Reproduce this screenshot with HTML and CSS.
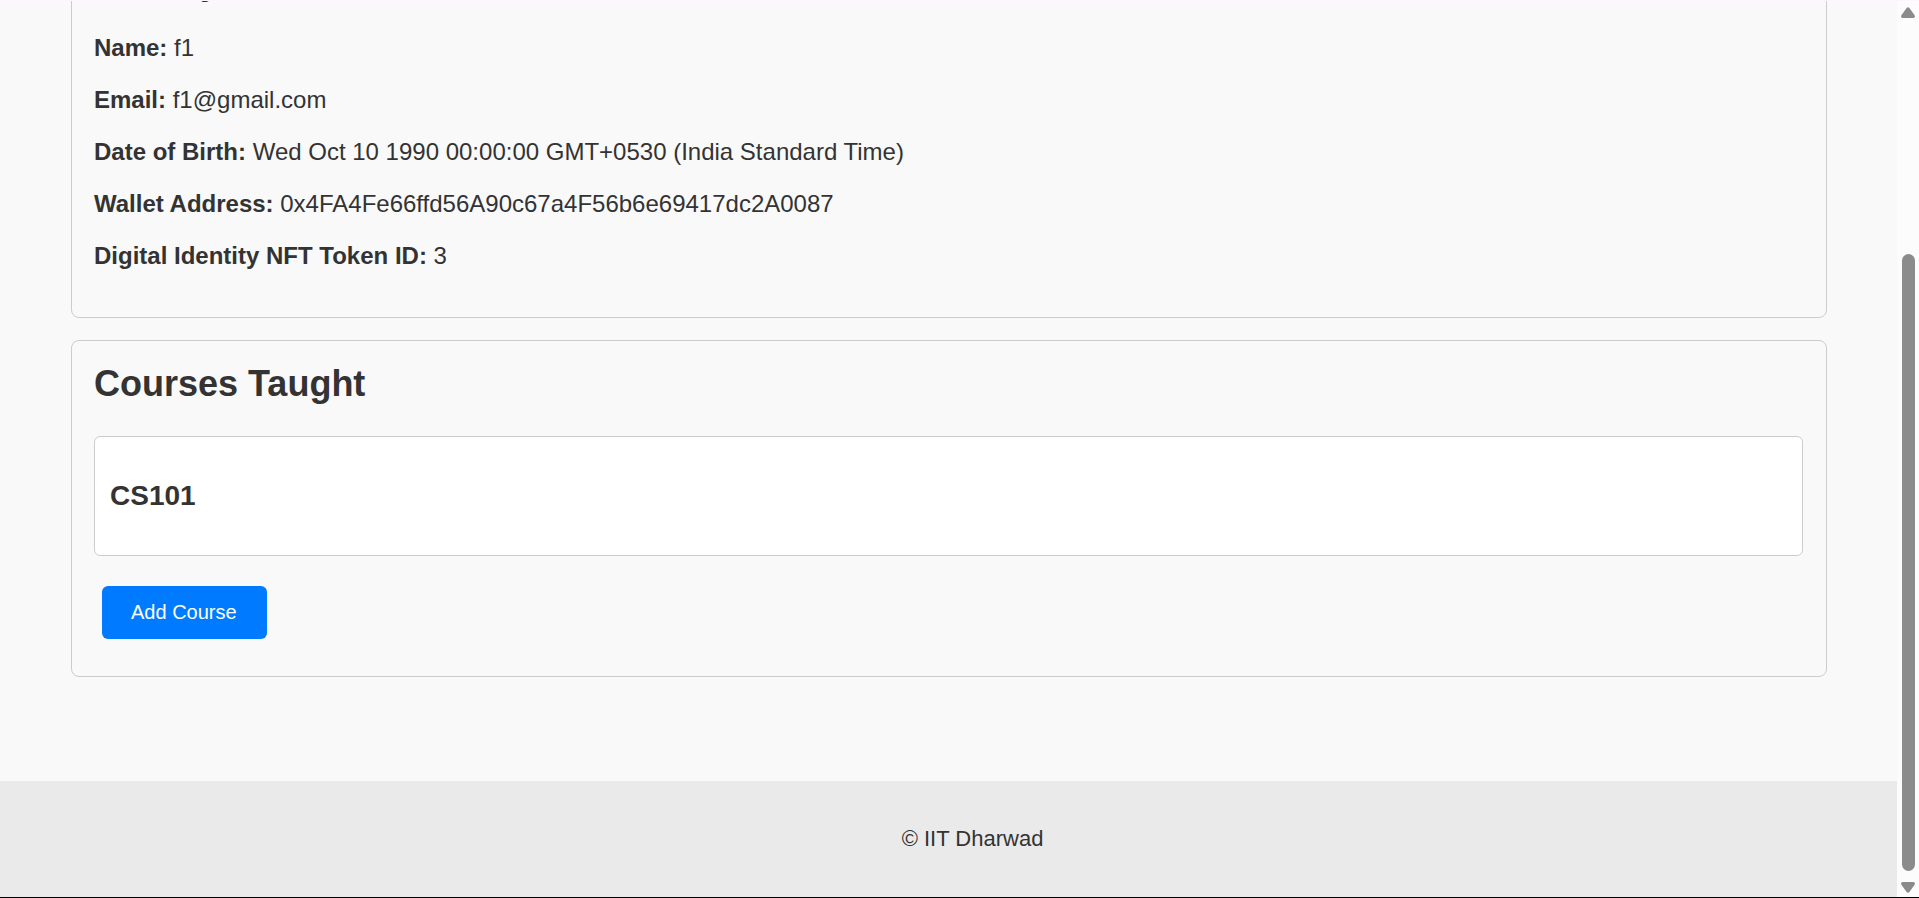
FILE: index.html
```html
<!DOCTYPE html>
<html lang="en">
<head>
<meta charset="utf-8">
<title>Faculty Profile</title>
<link rel="stylesheet" href="styles.css">
</head>
<body>
<div class="viewport">
  <div class="page">
    <main class="content">
      <section class="card card-identity">
        <h2 class="card-title">Faculty Details</h2>
        <p class="field"><strong>Name:</strong> f1</p>
        <p class="field"><strong>Email:</strong> f1@gmail.com</p>
        <p class="field"><strong>Date of Birth:</strong> Wed Oct 10 1990 00:00:00 GMT+0530 (India Standard Time)</p>
        <p class="field"><strong>Wallet Address:</strong> 0x4FA4Fe66ffd56A90c67a4F56b6e69417dc2A0087</p>
        <p class="field"><strong>Digital Identity NFT Token ID:</strong> 3</p>
      </section>
      <section class="card card-courses">
        <h2 class="card-title">Courses Taught</h2>
        <article class="course"><h3 class="course-name">CS101</h3></article>
        <button class="add-course" type="button">Add Course</button>
      </section>
    </main>
    <footer class="footer"><p class="footer-text">© IIT Dharwad</p></footer>
  </div>
  <div class="scrollbar" aria-hidden="true">
    <svg class="arrow" viewBox="0 0 14 11"><path d="M5.6 1Q7-.6 8.4 1L13.6 8.2Q14.6 10.6 12.4 11H1.6Q-.6 10.6.4 8.2Z"/></svg>
    <div class="thumb"></div>
    <svg class="arrow" viewBox="0 0 14 11"><path d="M5.6 10Q7 11.6 8.4 10L13.6 2.8Q14.6.4 12.4 0H1.6Q-.6.4.4 2.8Z"/></svg>
  </div>
</div>
</body>
</html>
```
FILE: styles.css
```css
* { box-sizing: border-box; }
body {
  margin: 0;
  background: #f9f9f9;
  color: #333;
  font: 24px/28px "Liberation Sans", Arial, sans-serif;
}
.viewport {
  display: flex;
  height: 100vh;
  overflow: hidden;
  border-top: 1px solid #fdf5fd;
  border-bottom: 1px solid #000;
}
.page {
  flex: 1;
  min-width: 0;
  display: flex;
  flex-direction: column;
  justify-content: flex-end;
}
.content {
  display: flex;
  flex-direction: column;
  gap: 22px;
  padding: 0 70px 104px 71px;
}
.card {
  border: 1px solid #ccc;
  border-radius: 8px;
  padding: 22px 23px 22px 22px;
}
.card-title {
  margin: 0 0 31px;
  font-size: 36px;
  line-height: 42px;
}
.field { margin: 0 0 24px; }
.card-identity { padding-bottom: 23px; }
.card-courses { padding-bottom: 37px; }
.course {
  padding: 44px 15px;
  background: #fff;
  border: 1px solid #ccc;
  border-radius: 6px;
}
.course-name {
  margin: 0;
  font-size: 28px;
  line-height: 30px;
}
.add-course {
  display: block;
  margin: 30px 0 0 8px;
  padding: 15px 30px 15px 29px;
  border: 0;
  border-radius: 6px;
  background: #007bff;
  color: #fff;
  font: 20px/23px "Liberation Sans", Arial, sans-serif;
}
.footer {
  padding: 44px 0 44px 48px;
  background: #eaeaea;
  text-align: center;
}
.footer-text {
  margin: 0;
  font-size: 22px;
}
.scrollbar {
  width: 22px;
  display: flex;
  flex-direction: column;
  align-items: center;
  padding: 6px 0 4px;
  background: #fcfcfc;
}
.arrow {
  width: 14px;
  height: 11px;
  flex: none;
  fill: #8b8b8b;
}
.thumb {
  width: 13px;
  flex: 1;
  margin: 236px 0 11px;
  border-radius: 7px;
  background: #8b8b8b;
}
```
